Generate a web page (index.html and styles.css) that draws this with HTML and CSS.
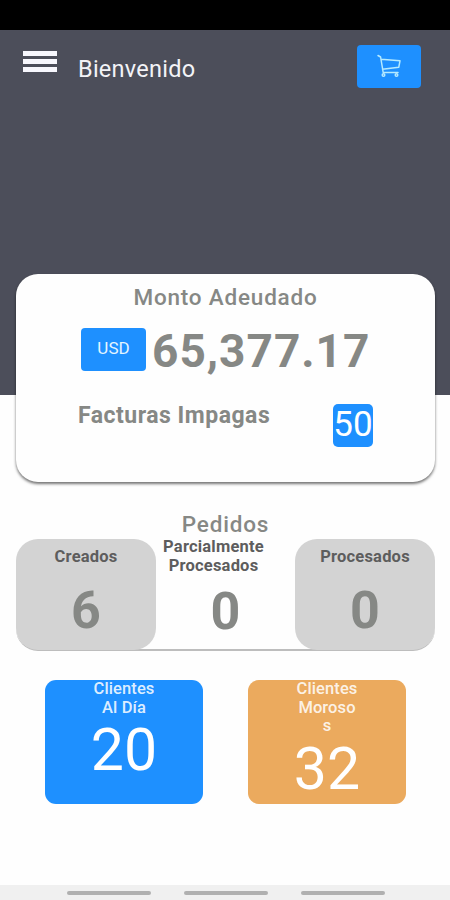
FILE: index.html
```html
<!DOCTYPE html>
<html lang="es">
<head>
<meta charset="utf-8">
<title>Bienvenido</title>
<link rel="stylesheet" href="styles.css">
</head>
<body>
<div class="status"></div>
<header class="hero">
  <div class="menu"><i></i><i></i><i></i></div>
  <h1><span>Bienvenido</span></h1>
  <div class="cart">
    <svg width="26" height="26" viewBox="0 0 26 26" fill="none" stroke="#b5eaff" stroke-width="1.5" stroke-linejoin="round" stroke-linecap="round"><path d="M2 1.500 4.600 3 7.200 18.500H22M5 5.300 24 6.800 22.800 13.200 6.500 15.200"/><circle cx="7.500" cy="21" r="1.300"/><circle cx="20.500" cy="21" r="1.300"/></svg>
  </div>
</header>
<main>
  <section class="card">
    <h2 class="owed"><span>Monto Adeudado</span></h2>
    <div class="amount"><div class="usd"><span>USD</span></div><strong>65,377.17</strong></div>
    <div class="bills"><b>Facturas Impagas</b><div class="count"><span>50</span></div></div>
  </section>
  <h2 class="orders-title"><span>Pedidos</span></h2>
  <section class="orders">
    <div class="order shaded"><h3><span>Creados</span></h3><strong>6</strong></div>
    <div class="order partial"><h3><span>Parcialmente</span><br><span>Procesados</span></h3><strong>0</strong></div>
    <div class="order shaded"><h3><span>Procesados</span></h3><strong>0</strong></div>
  </section>
  <section class="clients">
    <div class="client current"><h3>Clientes<br>Al Día</h3><p>20</p></div>
    <div class="client late"><h3>Clientes<br>Moroso<br>s</h3><p>32</p></div>
  </section>
</main>
<footer class="nav"><i></i><i></i><i></i></footer>
</body>
</html>
```
FILE: styles.css
```css
* { box-sizing: border-box; margin: 0; padding: 0; }
body {
  width: 450px; height: 900px; overflow: hidden;
  display: flex; flex-direction: column;
  background: #fefefe; font-family: Roboto, sans-serif; color: #868885;
}
.status { height: 30px; background: #000; flex: none; }
.hero {
  height: 365px; flex: none; background: #4c4e5a;
  display: flex; align-items: flex-start; padding: 15px 29px 0 23px;
}
.menu { width: 34px; margin-top: 6px; display: grid; gap: 3px; }
.menu i { height: 5px; background: #f7f7fd; }
h1 {
  flex: 1; margin: 9px 0 0 21px; color: #f3f3f7;
  font-size: 23.500px; line-height: 30px; font-weight: 400; letter-spacing: .25px;
}
.cart {
  width: 64px; height: 43px; border-radius: 4px; background: #1e90ff;
  display: flex; justify-content: center; align-items: center;
}
main { flex: 1; margin-top: -121px; padding: 0 15px 0 16px; }
.card {
  height: 208px; border-radius: 22px; background: #fefefe; padding-top: 8px;
  box-shadow: 0 2px 3px rgba(0,0,0,.55);
}
.owed, .orders-title {
  font-size: 22.500px; line-height: 31px; height: 30px; font-weight: 500; text-align: center; letter-spacing: .8px;
}
.amount { display: flex; margin: 16px 0 0 65px; }
.usd {
  width: 65px; height: 43px; border-radius: 4px; background: #1e90ff; color: #e4f5ff;
  font-size: 17px; line-height: 41px; text-align: center;
}
.amount strong { font-size: 46px; line-height: 47px; height: 43px; margin-left: 6px; letter-spacing: 1px; }
.bills { display: flex; margin: 33px 0 0 62px; height: 43px; }
.bills b { width: 255px; font-size: 23px; line-height: 30px; margin-top: -3px; letter-spacing: .5px; }
.count {
  width: 40px; height: 43px; border-radius: 5px; background: #1e90ff; color: #fff;
  font-size: 35px; line-height: 41px; text-align: center;
}
.orders-title { margin-top: 27px; }
.orders {
  height: 112px; display: grid; grid-template-columns: 140px 139px 140px;
  border-bottom: 2px solid #bdbdbd; border-radius: 0 0 22px 22px;
}
.order { border-radius: 22px; text-align: center; height: 111px; }
.shaded { background: #d3d3d3; }
.order h3 { color: #5d5d5d; font-size: 16.500px; line-height: 18.500px; padding-top: 9px; letter-spacing: .2px; }
.order strong { display: block; font-size: 52px; line-height: 56px; margin-top: 16px; }
.partial h3 { padding-top: 0; margin: -1px 20px 0 -4px; }
.partial strong { margin-top: 9px; }
.clients { display: flex; gap: 45px; margin: 29px 0 0 29px; }
.client { width: 158px; height: 124px; border-radius: 11px; text-align: center; color: #fff; }
.current { background: #1e90ff; }
.late { background: #ebaa5e; }
.client h3 { color: #ffffffdd; font-size: 16.500px; line-height: 18.500px; font-weight: 500; letter-spacing: .1px; }
.client p { font-size: 59px; line-height: 64px; margin-top: 1px; }
.nav {
  height: 15px; flex: none; background: #f0f0f0;
  display: flex; gap: 33px; padding: 6px 0 0 67px;
}
.nav i { width: 84px; height: 4px; border-radius: 2px; background: #b0b0b0; }
```
